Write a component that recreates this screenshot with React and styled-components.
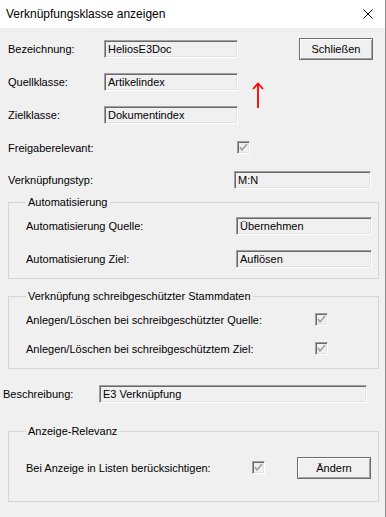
import React from 'react';
import styled, { createGlobalStyle } from 'styled-components';

const Global = createGlobalStyle`
    body {
        margin: 0;
        background: #ffffff;
    }
`;

const Window = styled.div`
    width: 385px;
    height: 517px;
    border-right: 1px solid #8c8c8c;
    background: #f0f0f0;
    font-family: 'Liberation Sans', Arial, sans-serif;
    font-size: 11px;
    color: #000;
    display: flex;
    flex-direction: column;
    overflow: hidden;
`;

const TitleBar = styled.div`
    height: 28px;
    flex: none;
    background: #fff;
    display: flex;
    align-items: center;
    justify-content: space-between;
    padding: 0 12px 0 6px;
    font-size: 12px;
`;

const Body = styled.div`
    padding-top: 4px;
    display: flex;
    flex-direction: column;
`;

const TopGrid = styled.div`
    display: grid;
    grid-template-columns: 96px 134px 1fr 74px;
    grid-auto-rows: 33px;
    padding: 0 12px 0 8px;
    align-items: center;
`;

const Row = styled.div`
    display: flex;
    align-items: center;
    height: ${(p) => p.$h || 33}px;
    padding-left: ${(p) => p.$pad ?? 8}px;
    margin-top: ${(p) => p.$mt || 0}px;
`;

const Label = styled.span`
    width: ${(p) => p.$w}px;
    flex: none;
    white-space: nowrap;
`;

const TextBox = styled.div`
    width: ${(p) => p.$w}px;
    height: 18px;
    box-sizing: border-box;
    border-top: 1px solid #a0a0a0;
    border-left: 1px solid #a0a0a0;
    border-bottom: 1px solid #fff;
    border-right: 1px solid #fff;
    box-shadow: inset 1px 1px #696969, inset -1px -1px #e3e3e3;
    background: #f0f0f0;
    padding: 0 3px;
    display: flex;
    align-items: center;
    white-space: nowrap;
`;

const Button = styled.div`
    width: 74px;
    height: 22px;
    box-sizing: border-box;
    border: 1px solid #6e6e6e;
    box-shadow: inset 1px 1px #fff, inset -1px -1px #a0a0a0;
    background: #f0f0f0;
    display: flex;
    align-items: center;
    justify-content: center;
    margin-left: ${(p) => p.$ml || 0}px;
`;

const Check = styled.span`
    width: 13px;
    height: 13px;
    box-sizing: border-box;
    flex: none;
    border-top: 1px solid #a0a0a0;
    border-left: 1px solid #a0a0a0;
    border-bottom: 1px solid #fff;
    border-right: 1px solid #fff;
    box-shadow: inset 1px 1px #696969, inset -1px -1px #e3e3e3;
    background: #f0f0f0;
    display: flex;
    align-items: center;
    justify-content: center;
`;

const Group = styled.fieldset`
    margin: ${(p) => p.$mt}px 6px 0 8px;
    padding: ${(p) => p.$pt || 0}px 0 ${(p) => p.$pb}px 17px;
    border: 1px solid #d5d5d5;
    min-width: 0;
`;

const Legend = styled.legend`
    margin-left: 0;
    padding: 0 2px;
    line-height: 13px;
`;

const GroupRow = styled.div`
    display: flex;
    align-items: center;
    height: ${(p) => p.$h}px;
`;

const Arrow = styled.svg`
    grid-column: 3;
    grid-row: 2 / span 2;
    align-self: start;
    margin: 17px 0 0 14px;
`;

function CheckBox() {
    return (
        <Check>
            <svg width="9" height="9" viewBox="0 0 9 9">
                <polyline points="1,4 3,7 8,1" fill="none" stroke="#a0a0a0" strokeWidth="1.6" />
            </svg>
        </Check>
    );
}

export default function App() {
    return (
        <Window>
            <Global />
            <TitleBar>
                <span>Verknüpfungsklasse anzeigen</span>
                <svg width="10" height="10" viewBox="0 0 10 10">
                    <path d="M0.5 0.5 L9.5 9.5 M9.5 0.5 L0.5 9.5" stroke="#000" strokeWidth="1" />
                </svg>
            </TitleBar>
            <Body>
                <TopGrid>
                    <Label>Bezeichnung:</Label>
                    <TextBox $w={134}>HeliosE3Doc</TextBox>
                    <span />
                    <Button>Schließen</Button>
                    <Label>Quellklasse:</Label>
                    <TextBox $w={134}>Artikelindex</TextBox>
                    <Arrow width="12" height="26" viewBox="0 0 12 26">
                        <path d="M6 2 L6 26 M1 7 L6 1.5 L11 7" fill="none" stroke="#ff0000" strokeWidth="1.8" />
                    </Arrow>
                    <Label style={{ gridColumn: 1 }}>Zielklasse:</Label>
                    <TextBox $w={134}>Dokumentindex</TextBox>
                </TopGrid>
                <Row>
                    <Label $w={229}>Freigaberelevant:</Label>
                    <CheckBox />
                </Row>
                <Row $h={32}>
                    <Label $w={226}>Verknüpfungstyp:</Label>
                    <TextBox $w={137}>M:N</TextBox>
                </Row>
                <Group $mt={0} $pb={3}>
                    <Legend>Automatisierung</Legend>
                    <GroupRow $h={33}>
                        <Label $w={210}>Automatisierung Quelle:</Label>
                        <TextBox $w={136}>Übernehmen</TextBox>
                    </GroupRow>
                    <GroupRow $h={33}>
                        <Label $w={210}>Automatisierung Ziel:</Label>
                        <TextBox $w={136}>Auflösen</TextBox>
                    </GroupRow>
                </Group>
                <Group $mt={11} $pt={2} $pb={5}>
                    <Legend>Verknüpfung schreibgeschützter Stammdaten</Legend>
                    <GroupRow $h={29}>
                        <Label $w={289}>Anlegen/Löschen bei schreibgeschützter Quelle:</Label>
                        <CheckBox />
                    </GroupRow>
                    <GroupRow $h={29}>
                        <Label $w={289}>Anlegen/Löschen bei schreibgeschütztem Ziel:</Label>
                        <CheckBox />
                    </GroupRow>
                </Group>
                <Row $pad={3} $mt={8}>
                    <Label $w={96}>Beschreibung:</Label>
                    <TextBox $w={268}>E3 Verknüpfung</TextBox>
                </Row>
                <Group $mt={15} $pt={13} $pb={17}>
                    <Legend>Anzeige-Relevanz</Legend>
                    <GroupRow $h={33}>
                        <Label $w={226}>Bei Anzeige in Listen berücksichtigen:</Label>
                        <CheckBox />
                        <Button $ml={32}>Ändern</Button>
                    </GroupRow>
                </Group>
            </Body>
        </Window>
    );
}
